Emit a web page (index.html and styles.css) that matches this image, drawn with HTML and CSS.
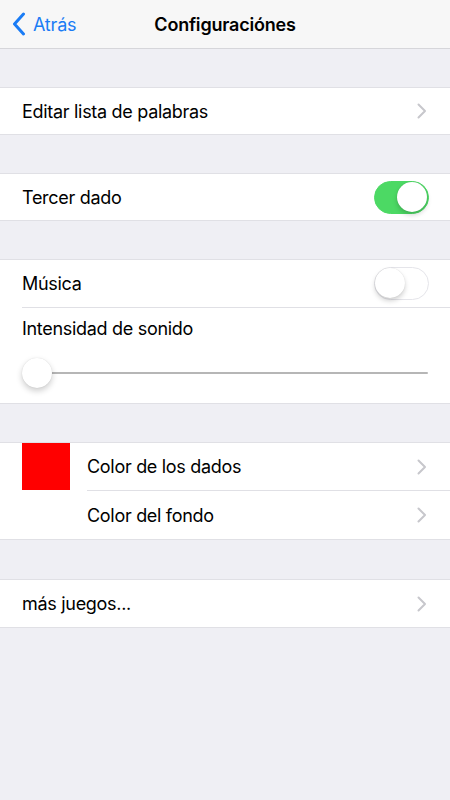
FILE: index.html
```html
<!DOCTYPE html>
<html lang="es">
<head>
<meta charset="utf-8">
<title>Configuraciónes</title>
<link rel="stylesheet" href="styles.css">
</head>
<body>
<header class="nav">
  <div class="back">
    <svg class="back-chev" width="14" height="24" viewBox="0 0 14 24"><path d="M11.5 2 L2.5 12 L11.5 22" fill="none" stroke="#1a7cf5" stroke-width="3" stroke-linecap="round" stroke-linejoin="round"/></svg>
    <span>Atrás</span>
  </div>
  <div class="title">Configuraciónes</div>
</header>

<section class="group">
  <div class="row short"><span class="label">Editar lista de palabras</span><svg class="chev" width="10" height="16" viewBox="0 0 10 16"><path d="M1.5 1.5 L8 8 L1.5 14.5" fill="none" stroke="#c7c7cc" stroke-width="2" stroke-linecap="round" stroke-linejoin="round"/></svg></div>
</section>

<section class="group">
  <div class="row short"><span class="label">Tercer dado</span><span class="toggle on"><span class="knob"></span></span></div>
</section>

<section class="group">
  <div class="row"><span class="label">Música</span><span class="toggle"><span class="knob"></span></span></div>
  <div class="row slider-row">
    <span class="label">Intensidad de sonido</span>
    <div class="slider"><span class="track"></span><span class="thumb"></span></div>
  </div>
</section>

<section class="group colors">
  <div class="swatch"></div>
  <div class="color-rows">
    <div class="row"><span class="label">Color de los dados</span><svg class="chev" width="10" height="16" viewBox="0 0 10 16"><path d="M1.5 1.5 L8 8 L1.5 14.5" fill="none" stroke="#c7c7cc" stroke-width="2" stroke-linecap="round" stroke-linejoin="round"/></svg></div>
    <div class="row"><span class="label">Color del fondo</span><svg class="chev" width="10" height="16" viewBox="0 0 10 16"><path d="M1.5 1.5 L8 8 L1.5 14.5" fill="none" stroke="#c7c7cc" stroke-width="2" stroke-linecap="round" stroke-linejoin="round"/></svg></div>
  </div>
</section>

<section class="group last">
  <div class="row"><span class="label">más juegos...</span><svg class="chev" width="10" height="16" viewBox="0 0 10 16"><path d="M1.5 1.5 L8 8 L1.5 14.5" fill="none" stroke="#c7c7cc" stroke-width="2" stroke-linecap="round" stroke-linejoin="round"/></svg></div>
</section>
</body>
</html>
```
FILE: styles.css
```css
* { box-sizing: border-box; }
html, body { margin: 0; padding: 0; }
body {
  width: 450px;
  min-height: 800px;
  background: #efeff4;
  font-family: Inter, "Liberation Sans", sans-serif;
  color: #000;
}
.nav {
  height: 49px;
  background: #f7f7f7;
  border-bottom: 1px solid #d6d6da;
  display: flex;
  align-items: center;
  justify-content: center;
  position: relative;
}
.back {
  position: absolute;
  left: 12px;
  top: 0;
  height: 48px;
  display: flex;
  align-items: center;
  gap: 7px;
  color: #1a7cf5;
  font-size: 18px;
  letter-spacing: -0.2px;
}
.title {
  font-size: 18px;
  font-weight: 600;
  letter-spacing: -0.2px;
}
.group {
  margin-top: 38px;
  background: #fff;
  border-top: 1px solid #e0e0e5;
  border-bottom: 1px solid #e0e0e5;
}
.group.last { margin-top: 39px; }
.row {
  height: 47px;
  display: flex;
  align-items: center;
  justify-content: space-between;
  padding: 0 22px 0 22px;
  font-size: 18px;
  letter-spacing: -0.3px;
  position: relative;
}
.row.short { height: 46px; }
.row + .row { border-top: 1px solid #e0e0e5; margin-left: 22px; padding-left: 0; }
.chev { display: block; margin-right: 1px; }
.toggle {
  width: 55px;
  height: 33px;
  border-radius: 17px;
  background: #fff;
  border: 1.5px solid #e5e5ea;
  position: relative;
  margin-right: -1px;
}
.toggle.on { background: #4cd964; border-color: #4cd964; }
.knob {
  position: absolute;
  top: 0;
  left: 0;
  width: 30px;
  height: 30px;
  border-radius: 50%;
  background: #fff;
  box-shadow: 0 3px 5px rgba(0,0,0,0.18), 0 0 1px rgba(0,0,0,0.15);
}
.toggle.on .knob { left: 22px; }
.slider-row {
  height: 96px;
  flex-direction: column;
  align-items: stretch;
  justify-content: flex-start;
  padding-top: 10px;
}
.slider-row .label { line-height: 22px; }
.slider {
  position: relative;
  height: 32px;
  margin-top: 17px;
  display: flex;
  align-items: center;
}
.track {
  flex: 1;
  height: 2px;
  background: #b6b6b6;
  border-radius: 1px;
  margin-left: 10px;
}
.thumb {
  position: absolute;
  left: 0;
  top: 1px;
  width: 30px;
  height: 30px;
  border-radius: 50%;
  background: #fff;
  box-shadow: 0 3px 6px rgba(0,0,0,0.2), 0 0 1px rgba(0,0,0,0.15);
}
.colors {
  display: flex;
  align-items: flex-start;
}
.swatch {
  width: 48px;
  height: 47px;
  background: #ff0000;
  margin-left: 22px;
  flex: none;
}
.color-rows { flex: 1; margin-left: 17px; }
.color-rows .row { padding-left: 0; }
.color-rows .row + .row { margin-left: 0; height: 49px; }
```
